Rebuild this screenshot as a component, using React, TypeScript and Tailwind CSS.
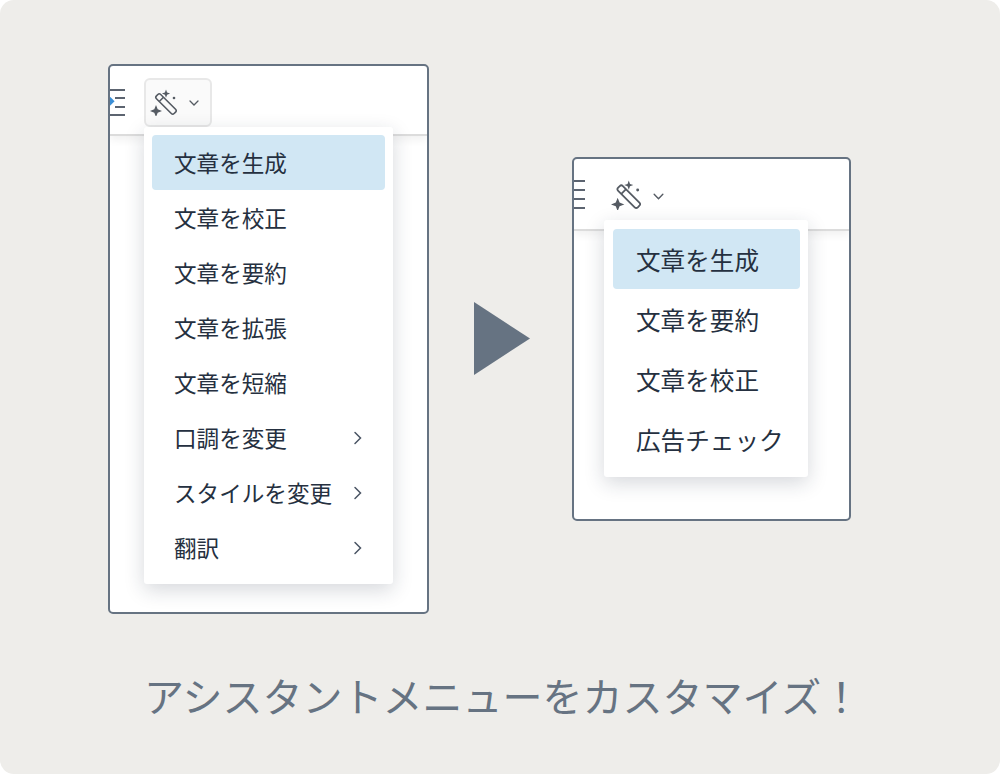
const FONT = "font-['Noto_Sans_CJK_JP','Noto_Sans',sans-serif]";

function WandIcon({ className }: { className: string }) {
  return (
    <svg viewBox="0 0 27 27" className={className} fill="none">
      {/* Wand body */}
      <g transform="rotate(-45 16 15)">
        <rect x="13" y="2.500" width="6" height="25" rx="2" stroke="currentColor" strokeWidth="1.600" />
        <path d="M13 8.500h6" stroke="currentColor" strokeWidth="1.600" />
      </g>
      {/* Sparkles */}
      <path d="M6 16l1.700 4.300L12 22l-4.300 1.700L6 28l-1.700-4.300L0 22l4.300-1.700z" fill="currentColor" />
      <path d="M16 0.500l1.100 3 3 1.100-3 1.100-1.100 3-1.100-3-3-1.100 3-1.100z" fill="currentColor" />
      <circle cx="24" cy="9" r="1.300" fill="currentColor" />
    </svg>
  );
}

function Chevron({ className }: { className: string }) {
  return (
    <svg viewBox="0 0 12 12" className={className} fill="none" stroke="currentColor" strokeWidth="1.300" strokeLinecap="round">
      <path d="M2 4l4 4 4-4" />
    </svg>
  );
}

function ChevronRight() {
  return (
    <svg viewBox="0 0 10 14" className="h-[14px] w-[10px] text-[#4a5564]" fill="none" stroke="currentColor" strokeWidth="1.500" strokeLinecap="round">
      <path d="M2 1.500L7.500 7 2 12.500" />
    </svg>
  );
}

const leftItems = [
  { label: "文章を生成", active: true },
  { label: "文章を校正" },
  { label: "文章を要約" },
  { label: "文章を拡張" },
  { label: "文章を短縮" },
  { label: "口調を変更", sub: true },
  { label: "スタイルを変更", sub: true },
  { label: "翻訳", sub: true },
];

const rightItems = [
  { label: "文章を生成", active: true },
  { label: "文章を要約" },
  { label: "文章を校正" },
  { label: "広告チェック" },
];

export default function App() {
  return (
    <div className="h-[774px] w-[1000px] bg-white">
      <div className={`flex h-full w-full flex-col rounded-[14px] bg-[#eeedea] ${FONT}`}>
        <div className="flex h-[632px] shrink-0 pl-[108px] pt-[64px]">
          {/* Before */}
          <div className="relative h-[550px] w-[321px] shrink-0 overflow-hidden rounded-[5px] border-2 border-[#667382] bg-white">
            <div className="flex h-[70px] border-b-2 border-[#dcdcdc] shadow-[0_4px_8px_rgba(0,0,0,0.06)]">
              <div className="relative mt-[23px] flex h-[27px] w-[15px] shrink-0 flex-col justify-between">
                <div className="h-[2px] w-full bg-[#5c6470]" />
                <div className="ml-[5px] h-[2px] w-[10px] bg-[#5c6470]" />
                <div className="ml-[5px] h-[2px] w-[10px] bg-[#5c6470]" />
                <div className="h-[2px] w-full bg-[#5c6470]" />
                <div className="absolute left-[-3px] top-[9px] h-[7px] w-[6px] rotate-45 bg-[#3b8fd6]" />
              </div>
              <div className="ml-[19px] mt-[12px] flex h-[49px] w-[68px] items-center rounded-[6px] border-2 border-[#e8e8e8] bg-[#fafafa] pl-[4px] text-[#555b63]">
                <WandIcon className="h-[27px] w-[27px]" />
                <Chevron className="ml-[11px] h-[12px] w-[12px]" />
              </div>
            </div>
            <div className="absolute left-[34px] top-[61px] w-[249px] rounded-[3px] bg-white px-[8px] pb-[9px] pt-[8px] shadow-[0_6px_20px_rgba(30,40,60,0.18)]">
              {leftItems.map((item) => (
                <div
                  key={item.label}
                  className={`flex h-[55px] items-center justify-between rounded-[4px] pl-[22px] pr-[22px] text-[22.600px] text-[#253040] ${item.active ? "bg-[#d1e7f4]" : ""}`}
                >
                  <span>{item.label}</span>
                  {item.sub && <ChevronRight />}
                </div>
              ))}
            </div>
          </div>

          {/* Arrow */}
          <svg viewBox="0 0 56 73" className="ml-[45px] mt-[238px] h-[73px] w-[56px] shrink-0">
            <path d="M0 0L56 36.500 0 73z" fill="#667382" />
          </svg>

          {/* After */}
          <div className="relative ml-[42px] mt-[93px] h-[364px] w-[279px] shrink-0 overflow-hidden rounded-[5px] border-2 border-[#667382] bg-white">
            <div className="flex h-[72px] border-b-2 border-[#dcdcdc] shadow-[0_4px_8px_rgba(0,0,0,0.06)]">
              <div className="mt-[21px] flex h-[29px] w-[11px] shrink-0 flex-col justify-between">
                <div className="h-[2px] w-full bg-[#5c6470]" />
                <div className="h-[2px] w-full bg-[#5c6470]" />
                <div className="h-[2px] w-full bg-[#5c6470]" />
                <div className="h-[2px] w-full bg-[#5c6470]" />
              </div>
              <div className="ml-[26px] mt-[20px] flex h-[32px] items-center text-[#555b63]">
                <WandIcon className="h-[30px] w-[30px]" />
                <Chevron className="ml-[11px] mt-[2px] h-[13px] w-[13px]" />
              </div>
            </div>
            <div className="absolute left-[30px] top-[61px] w-[204px] rounded-[3px] bg-white pb-[8px] pl-[9px] pr-[8px] pt-[9px] shadow-[0_6px_20px_rgba(30,40,60,0.18)]">
              {rightItems.map((item) => (
                <div
                  key={item.label}
                  className={`flex h-[60px] items-center rounded-[4px] pl-[23px] text-[24.600px] text-[#253040] ${item.active ? "bg-[#d1e7f4]" : ""}`}
                >
                  {item.label}
                </div>
              ))}
            </div>
          </div>
        </div>

        <p className="mt-[30px] pl-[144px] text-[40px] leading-[66px] text-[#667382] whitespace-nowrap">
          アシスタントメニューをカスタマイズ！
        </p>
      </div>
    </div>
  );
}
